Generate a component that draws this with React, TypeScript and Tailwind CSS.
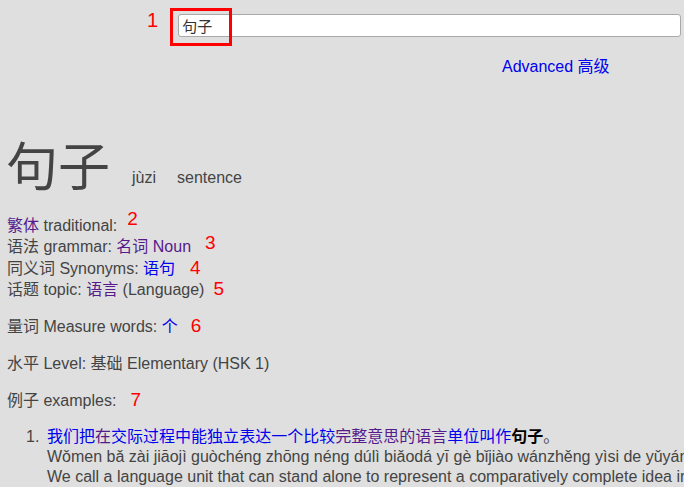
import React from "react";

const B = "text-[#0000ee]";
const P = "text-[#551a8b]";

function Mark({ n, className = "" }: { n: string; className?: string }) {
  return (
    <span className={"inline-block text-[19px] leading-[16px] text-[#ff0000] " + className}>{n}</span>
  );
}

export default function App() {
  return (
    <div className="relative h-[487px] w-[684px] overflow-hidden bg-[#dfdfdf] text-[16px] text-[#444] font-['Liberation_Sans','Noto_Sans_CJK_SC',sans-serif]">
      <div className="flex items-start pt-[14px] pl-[147px]">
        <span className="-mt-[4px] text-[20px] leading-[20px] text-[#ff0000]">1</span>
        <input
          readOnly
          defaultValue="句子"
          className="ml-[20px] h-[23px] w-[503px] rounded-[3px] border border-[#a9a9a9] bg-white pl-[3px] text-[15px] text-[#333] outline-none font-['Liberation_Sans','Noto_Sans_CJK_SC',sans-serif]"
        />
      </div>
      <div className="absolute left-[170px] top-[8px] h-[38px] w-[62px] border-[3px] border-[#ff0000]" />

      <div className="mt-[21px] pl-[502px] leading-[18px]">
        <a className={B}>Advanced 高级</a>
      </div>

      <div className="mt-[62px] flex items-baseline pl-[6px]">
        <span className="text-[52px] leading-[60px]">句子</span>
        <span className="ml-[22px] -translate-y-[3px]">jùzi</span>
        <span className="ml-[21px] -translate-y-[3px]">sentence</span>
      </div>

      <div className="mt-[17px] pl-[7px] leading-[21.3px]">
        <div>
          <a className={P}>繁体</a> traditional:
          <Mark n="2" className="relative -top-[6px] ml-[10px]" />
        </div>
        <div>
          语法 grammar: <a className={P}>名词 Noun</a>
          <Mark n="3" className="relative -top-[3px] ml-[14px]" />
        </div>
        <div>
          同义词 Synonyms: <a className={B}>语句</a>
          <Mark n="4" className="ml-[15px]" />
        </div>
        <div>
          话题 topic: <a className={P}>语言</a> (Language)
          <Mark n="5" className="ml-[9px]" />
        </div>

        <div className="mt-[16px]">
          量词 Measure words: <a className={B}>个</a>
          <Mark n="6" className="ml-[13px]" />
        </div>

        <div className="mt-[16px]">水平 Level: 基础 Elementary (HSK 1)</div>

        <div className="mt-[15px]">
          例子 examples:
          <Mark n="7" className="ml-[14px]" />
        </div>
      </div>

      <ol className="mt-[16px] pl-[26px] leading-[20px] whitespace-nowrap">
        <li className="flex">
          <span className="w-[21px] shrink-0">1.</span>
          <div>
            <div>
              <a className={B}>我们</a>
              <a className={B}>把</a>
              <a className={P}>在</a>
              <a className={B}>交际</a>
              <a className={B}>过程</a>
              <a className={B}>中</a>
              <a className={B}>能</a>
              <a className={B}>独立</a>
              <a className={B}>表达</a>
              <a className={B}>一个</a>
              <a className={B}>比较</a>
              <a className={P}>完整</a>
              <a className={P}>意思</a>
              <a className={P}>的</a>
              <a className={P}>语言</a>
              <a className={B}>单位</a>
              <a className={B}>叫作</a>
              <b className="text-black">句子</b>。
            </div>
            <div>Wǒmen bǎ zài jiāojì guòchéng zhōng néng dúlì biǎodá yī gè bǐjiào wánzhěng yìsi de yǔyán dānwèi jiàozuò jùzi.</div>
            <div>We call a language unit that can stand alone to represent a comparatively complete idea in the process of communication a sentence.</div>
          </div>
        </li>
      </ol>
    </div>
  );
}
